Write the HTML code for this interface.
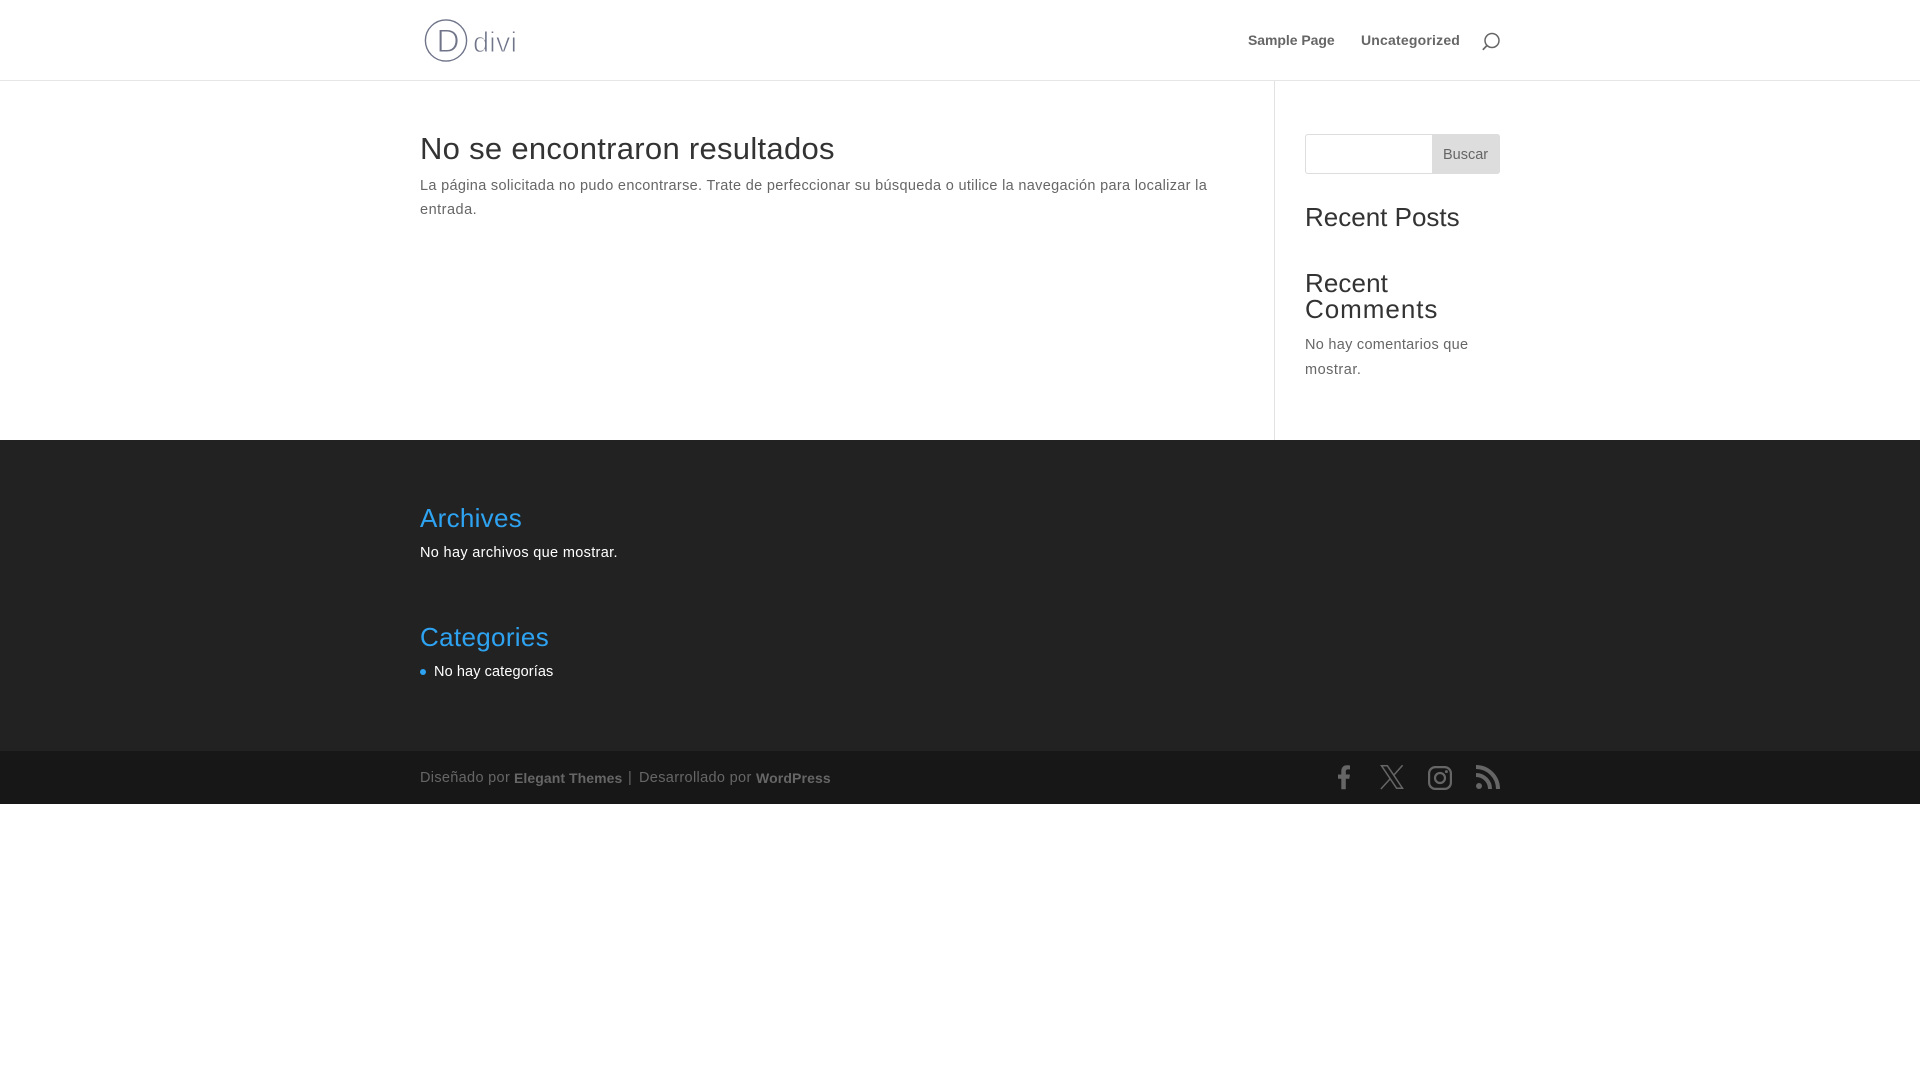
<!DOCTYPE html>
<html lang="es">
<head>
<meta charset="utf-8">
<title>No se encontraron resultados</title>
<style>
html,body{margin:0;padding:0;background:#fff;width:1920px;height:1080px;overflow:hidden}
body{position:relative;font-family:"Liberation Sans",Arial,sans-serif;font-size:14.5px;color:#666}
.t{position:absolute;white-space:nowrap;line-height:0;height:0}
.b{font-weight:700;font-size:14px}
.h{color:#333}
.w{font-size:26px}
#hdr{position:absolute;left:0;top:0;width:1920px;height:80px;border-bottom:1px solid #e6e6e6;box-sizing:content-box}
#side{position:absolute;left:1274px;top:81px;width:1px;height:359px;background:#e2e2e2}
#foot{position:absolute;left:0;top:440px;width:1920px;height:311px;background:#222}
#bar{position:absolute;left:0;top:751px;width:1920px;height:53px;background:#171717}
#inp{position:absolute;left:1305px;top:134px;width:195px;height:40px;box-sizing:border-box;border:1px solid #ddd;border-radius:3px;background:#fff}
#btn{position:absolute;left:1432px;top:134px;width:68px;height:40px;background:#ddd;border-radius:0 3px 3px 0}
#dot{position:absolute;left:420px;top:669px;width:6px;height:6px;border-radius:50%;background:#2ea3f2}
svg{position:absolute;overflow:visible}
</style>
</head>
<body>
<div id="hdr"></div>
<svg style="left:420px;top:15px" width="100" height="50" viewBox="0 0 100 50">
  <circle cx="26" cy="25.5" r="20.6" fill="none" stroke="#6f7489" stroke-width="1.4"/>
  <text x="16.5" y="37" font-family="Liberation Sans" font-size="32" fill="#6f7489" stroke="#fff" stroke-width=".9" textLength="21">D</text>
  <text x="53" y="37" font-family="Liberation Sans" font-size="29" fill="#6f7489" stroke="#fff" stroke-width=".9" textLength="44">divi</text>
</svg>

<span class="t b" style="left:1248px;top:40px;letter-spacing:-.05px">Sample Page</span>
<span class="t b" style="left:1361px;top:40px;letter-spacing:.2px">Uncategorized</span>
<svg style="left:1482px;top:32px" width="18" height="19" viewBox="0 0 18 19">
  <circle cx="10" cy="8.5" r="7" fill="none" stroke="#666" stroke-width="1.5"/>
  <path d="M5 13.5L.8 17.8" stroke="#666" stroke-width="1.7" fill="none"/>
</svg>

<span class="t h" style="left:420px;top:148.5px;font-size:31px;letter-spacing:.29px">No se encontraron resultados</span>
<span class="t" style="left:420px;top:186px;letter-spacing:.32px">La página solicitada no pudo encontrarse. Trate de perfeccionar su búsqueda o utilice la navegación para localizar la</span>
<span class="t" style="left:420px;top:210px;letter-spacing:.5px">entrada.</span>

<div id="side"></div>
<div id="inp"></div>
<div id="btn"></div>
<span class="t" style="left:1443px;top:155px">Buscar</span>

<span class="t h w" style="left:1305px;top:217px">Recent Posts</span>
<span class="t h w" style="left:1305px;top:283px;letter-spacing:.1px">Recent</span>
<span class="t h w" style="left:1305px;top:309px;letter-spacing:.96px">Comments</span>
<span class="t" style="left:1305px;top:345px;letter-spacing:.28px">No hay comentarios que</span>
<span class="t" style="left:1305px;top:370px;letter-spacing:.5px">mostrar.</span>

<div id="foot"></div>
<span class="t w" style="left:420px;top:518px;letter-spacing:.29px;color:#2ea3f2">Archives</span>
<span class="t" style="left:420px;top:553px;letter-spacing:.33px;color:#fff">No hay archivos que mostrar.</span>
<span class="t w" style="left:420px;top:637px;letter-spacing:.33px;color:#2ea3f2">Categories</span>
<div id="dot"></div>
<span class="t" style="left:434px;top:672px;letter-spacing:.1px;color:#fff">No hay categorías</span>

<div id="bar"></div>
<span class="t" style="left:420px;top:778px;letter-spacing:.32px">Diseñado por</span>
<span class="t b" style="left:514px;top:778px;letter-spacing:.07px">Elegant Themes</span>
<span class="t" style="left:628px;top:778px">|</span>
<span class="t" style="left:639px;top:778px;letter-spacing:.34px">Desarrollado por</span>
<span class="t b" style="left:756px;top:778px;letter-spacing:.13px">WordPress</span>

<svg style="left:1338px;top:765px" width="12" height="24.5" viewBox="0 0 12 24">
  <path fill="#666" d="M3.3 24V13.5H0V9.3h3.3V6.2C3.3 2.2 5.4 0 8.9 0c1.2 0 2.4.1 3.1.2v3.9H10c-1.7 0-2.2.9-2.2 2v3.2h4.1l-.6 4.2H7.8V24z"/>
</svg>
<svg style="left:1380px;top:765px" width="24" height="24" viewBox="0 0 24 24" fill="none" stroke="#666" stroke-width="1.5">
  <path d="M1.5 .8H7.4L22.5 23.2H16.6Z"/>
  <path d="M22.6 .2L13.6 10.4M10.2 13.8L.9 24"/>
</svg>
<svg style="left:1428px;top:766px" width="24" height="24" viewBox="0 0 24 24">
  <rect x="1.1" y="1.1" width="21.8" height="21.8" rx="6.2" fill="none" stroke="#666" stroke-width="2.2"/>
  <circle cx="12" cy="12" r="5" fill="none" stroke="#666" stroke-width="2.2"/>
  <circle cx="18.4" cy="5.6" r="1.45" fill="#666"/>
</svg>
<svg style="left:1476px;top:765px" width="24" height="24" viewBox="0 0 24 24">
  <circle cx="3" cy="21" r="3" fill="#666"/>
  <path fill="none" stroke="#666" stroke-width="4" d="M0 10A14 14 0 0 1 14 24"/>
  <path fill="none" stroke="#666" stroke-width="4" d="M0 2A22 22 0 0 1 22 24"/>
</svg>
</body>
</html>
